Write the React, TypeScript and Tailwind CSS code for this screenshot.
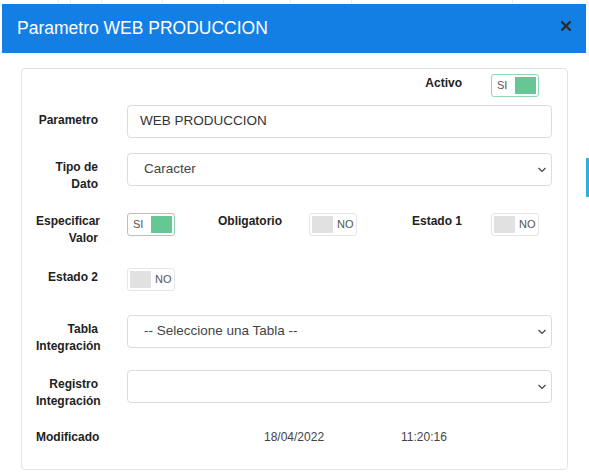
import React from 'react';

const font = { fontFamily: '"Liberation Sans", Arial, sans-serif' };

const Toggle: React.FC<{ on: boolean }> = ({ on }) =>
  on ? (
    <div className="flex h-[23px] w-[48px] items-center rounded-[3px] border border-[#8fd8b2] bg-white p-[2px]">
      <span className="flex-1 pl-[3px] text-[11px] text-[#555]">SI</span>
      <span className="h-full w-[21px] bg-[#66c795]" />
    </div>
  ) : (
    <div className="flex h-[23px] w-[48px] items-center rounded-[3px] border border-[#e6e6e6] bg-white p-[2px]">
      <span className="h-full w-[21px] bg-[#e1e1e1]" />
      <span className="flex-1 pl-[4px] text-[11px] text-[#555]">NO</span>
    </div>
  );

const Chevron = () => (
  <svg width="10" height="6" viewBox="0 0 10 6" className="text-[#444]">
    <polyline points="1.5,1 5,4.5 8.5,1" fill="none" stroke="currentColor" strokeWidth="1.2" />
  </svg>
);

const Select: React.FC<{ value?: string }> = ({ value }) => (
  <div className="flex h-[33px] flex-1 items-center justify-between rounded-[4px] border border-[#dcdcdc] pl-[16px] pr-[4px]">
    <span className="text-[13.5px] text-[#444]">{value}</span>
    <Chevron />
  </div>
);

const Label: React.FC<{ children: React.ReactNode; pt?: string }> = ({ children, pt = 'pt-0' }) => (
  <div className={`w-[62px] shrink-0 text-right text-[12px] font-bold leading-[17px] text-[#222] ${pt}`}>
    {children}
  </div>
);

export default function App() {
  return (
    <div className="relative h-[475px] w-[589px] overflow-hidden bg-white" style={font}>
      {/* page behind the modal */}
      <div className="absolute left-0 top-0 flex h-[5px] w-full">
        <div className="ml-[58px] h-full w-px bg-[#ececec]" />
        <div className="ml-[11px] h-full w-px bg-[#ececec]" />
        <div className="ml-[30px] h-full w-px bg-[#ececec]" />
        <div className="ml-[60px] h-full w-px bg-[#ececec]" />
        <div className="ml-[60px] h-full w-px bg-[#ececec]" />
        <div className="ml-[66px] h-full w-px bg-[#ececec]" />
        <div className="ml-[60px] h-full w-px bg-[#ececec]" />
        <div className="ml-[160px] h-full w-px bg-[#ececec]" />
      </div>
      <div className="absolute right-0 top-[158px] h-[39px] w-[3px] bg-[#2bb3e0]" />

      {/* modal */}
      <div className="relative ml-[2px] mt-[4px] w-[584px] bg-white">
        <div className="flex h-[49px] items-center justify-between bg-[#137fe5] pl-[15px] pr-[15px]">
          <h2 className="text-[17.5px] text-white">Parametro WEB PRODUCCION</h2>
          <svg width="10" height="10" viewBox="0 0 10 10" className="-mt-[6px] text-[#2b2b2b]">
            <path d="M1.2 1.2 L8.8 8.8 M8.8 1.2 L1.2 8.8" stroke="currentColor" strokeWidth="2.3" strokeLinecap="square" />
          </svg>
        </div>

        <div className="pl-[19px] pr-[18px] pt-[15px]">
          <div className="flex h-[402px] flex-col rounded-[4px] border border-[#e3e3e3] pl-[14px] pr-[15px]">
            {/* Activo */}
            <div className="mt-[5px] flex h-[22px] items-start">
              <div className="w-[364px]" />
              <Label pt="pt-[1px]">Activo</Label>
              <div className="ml-[29px]">
                <Toggle on />
              </div>
            </div>

            {/* Parametro */}
            <div className="mt-[9px] flex h-[33px] items-start gap-[29px]">
              <Label pt="pt-[7px]">Parametro</Label>
              <div className="flex h-[33px] flex-1 items-center rounded-[4px] border border-[#dcdcdc] pl-[12px]">
                <span className="text-[13.5px] text-[#333]">WEB PRODUCCION</span>
              </div>
            </div>

            {/* Tipo de Dato */}
            <div className="mt-[15px] flex h-[33px] items-start gap-[29px]">
              <Label pt="pt-[6px]">
                Tipo de
                <br />
                Dato
              </Label>
              <Select value="Caracter" />
            </div>

            {/* switches */}
            <div className="mt-[27px] grid h-[23px] grid-cols-[182px_182px_152px] items-start">
              <div className="flex items-start gap-[29px]">
                <Label>
                  Especificar
                  <br />
                  Valor
                </Label>
                <Toggle on />
              </div>
              <div className="flex items-start gap-[29px]">
                <Label>Obligatorio</Label>
                <Toggle on={false} />
              </div>
              <div className="flex items-start gap-[29px]">
                <Label>Estado 1</Label>
                <Toggle on={false} />
              </div>
            </div>

            <div className="mt-[32px] flex h-[22px] items-start gap-[29px]">
              <Label pt="pt-[1px]">Estado 2</Label>
              <Toggle on={false} />
            </div>

            {/* Tabla Integración */}
            <div className="mt-[25px] flex h-[33px] items-start gap-[29px]">
              <Label pt="pt-[6px]">
                Tabla
                <br />
                Integración
              </Label>
              <Select value="-- Seleccione una Tabla --" />
            </div>

            {/* Registro Integración */}
            <div className="mt-[22px] flex h-[33px] items-start gap-[29px]">
              <Label pt="pt-[6px]">
                Registro
                <br />
                Integración
              </Label>
              <Select />
            </div>

            {/* Modificado */}
            <div className="mt-[26px] flex h-[17px] items-center text-[12px] leading-[17px]">
              <span className="w-[62px] font-bold text-[#222]">Modificado</span>
              <span className="ml-[166px] text-[#444]">18/04/2022</span>
              <span className="ml-[77px] text-[#444]">11:20:16</span>
            </div>
          </div>
        </div>
      </div>
    </div>
  );
}
